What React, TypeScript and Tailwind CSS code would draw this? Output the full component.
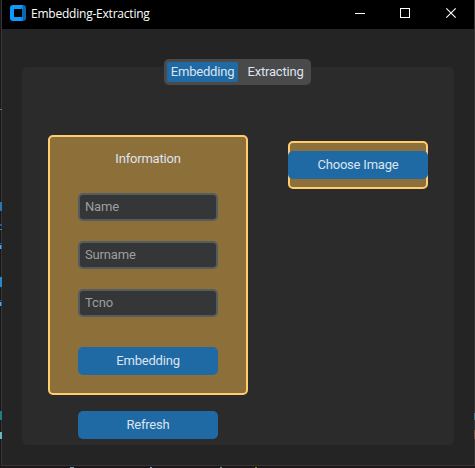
import React from "react";

const BUTTON =
  "flex h-7 w-[140px] items-center justify-center rounded-[5px] bg-[#1f6aa5] pb-[2px] text-[13px] leading-none text-[#dce4ee]";

function Button({ label }: { label: string }) {
  return <button className={BUTTON}>{label}</button>;
}

function Entry({ placeholder }: { placeholder: string }) {
  return (
    <input
      placeholder={placeholder}
      className="block h-7 w-[140px] rounded-[5px] border-2 border-[#565b5e] bg-[#343638] px-[5px] pb-[2px] text-[13px] leading-none tracking-[-0.15px] text-[#dce4ee] placeholder:text-[#9e9e9e] placeholder:opacity-100"
    />
  );
}

function TitleBar() {
  return (
    <header className="flex h-[29px] items-center bg-black pr-[17px] pb-[3px] pl-2">
      <svg width="16" height="16" viewBox="0 0 16 16">
        <path d="M3 0H13L11 4H4V12H11L13 16H3Q0 16 0 13V3Q0 0 3 0Z" fill="#0d9bff" />
        <path d="M12 0H13Q16 0 16 3V13Q16 16 13 16H12V12L12 4Z" fill="#0866b5" />
        <path d="M11 4L13 0V4ZM11 12H13V14L12 16Z" fill="#0d8eea" />
      </svg>
      <span className="ml-[5px] whitespace-nowrap pt-px font-['Open_Sans','Noto_Sans',sans-serif] text-[12px] leading-4 tracking-[-0.22px] text-white">
        Embedding-Extracting
      </span>
      <svg width="102" height="12" viewBox="0 0 102 12" shapeRendering="crispEdges" className="ml-auto">
        <path d="M0 6.5H10" stroke="white" />
        <rect x="45.5" y="1.5" width="9" height="9" fill="none" stroke="white" />
        <path d="M91.3 1.3L100.7 10.7M100.7 1.3L91.3 10.7" stroke="white" strokeWidth="1.1" shapeRendering="geometricPrecision" />
      </svg>
    </header>
  );
}

/* Slivers of the editor visible around the window. */
function EditorEdges() {
  return (
    <>
      <div className="absolute inset-y-0 left-0 flex w-[2px] flex-col pt-[109px]">
        <i className="h-px bg-[#8a6a5b]" />
        <i className="mt-[92px] h-[9px] bg-[#2478b8]" />
        <i className="mt-[13px] h-[2px] bg-[#265a9c]" />
        <i className="mt-[3px] h-px bg-[#3985b5]" />
        <i className="mt-[13px] h-px bg-[#28528b]" />
        <i className="mt-px h-1 border-l border-[#51a9e8] bg-[#2b62ab]" />
        <i className="mt-7 h-[10px] bg-[#2989c8]" />
        <i className="mt-[13px] h-px bg-[#28528b]" />
        <i className="mt-px h-1 border-l border-[#51a9e8] bg-[#2b62ab]" />
        <i className="mt-[105px] h-[9px] bg-[#208080]" />
        <i className="mt-3 h-[7px] bg-[#65b5c3]" />
      </div>
      <div className="absolute inset-y-0 right-0 flex w-px flex-col gap-[10px] pt-[413px]">
        <i className="h-[7px] bg-[#477387]" />
        <i className="h-[9px] bg-[#74513f]" />
      </div>
      <div className="absolute inset-x-0 bottom-0 flex h-px pl-[70px]">
        <i className="w-1 bg-[#8199ab]" />
        <i className="ml-[76px] w-[2px] bg-[#819dcc]" />
        <i className="ml-[68px] w-[2px] bg-[#729a99]" />
        <i className="ml-[33px] w-[2px] bg-[#838621]" />
      </div>
    </>
  );
}

export default function App() {
  return (
    <div className="relative h-[468px] w-[475px] overflow-hidden bg-[#1b1718] pl-px font-[Roboto,sans-serif] tracking-[-0.2px]">
      <div className="flex h-[466px] w-[474px] flex-col border-r border-b border-l border-[#353535] bg-[#242424]">
        <TitleBar />
        <main className="mx-5 mt-[38px] flex h-[378px] flex-col rounded-[5px] bg-[#2b2b2b]">
          <nav className="-mt-2 ml-[142px] flex h-[26px] w-[147px] rounded-[5px] bg-[#4a4a4a] p-[3px] text-[13px] leading-none text-[#dce4ee]">
            <button className="flex h-5 w-[71px] items-center justify-center rounded-[2px] bg-[#1f6aa5] pb-px">Embedding</button>
            <button className="flex h-5 flex-1 items-center justify-center pb-px pl-[5px]">Extracting</button>
          </nav>
          <div className="flex items-start gap-10 pt-[50px] pl-[26px]">
            <div className="flex flex-col items-center gap-4">
              <section className="flex h-[260px] w-[200px] flex-col items-center justify-between rounded-[5px] border-2 border-[#ffcc70] bg-[#8d6f3a] pt-2 pb-[18px]">
                <div className="flex flex-col items-center gap-5">
                  <h2 className="flex h-7 items-center pb-[2px] text-[13px] leading-none text-[#dce4ee]">Information</h2>
                  <Entry placeholder="Name" />
                  <Entry placeholder="Surname" />
                  <Entry placeholder="Tcno" />
                </div>
                <Button label="Embedding" />
              </section>
              <Button label="Refresh" />
            </div>
            <section className="mt-[6px] flex h-12 w-[140px] items-center justify-center rounded-[5px] border-2 border-[#ffcc70] bg-[#8d6f3a]">
              <div className="-mx-[2px] shrink-0">
                <Button label="Choose Image" />
              </div>
            </section>
          </div>
        </main>
      </div>
      <EditorEdges />
    </div>
  );
}
